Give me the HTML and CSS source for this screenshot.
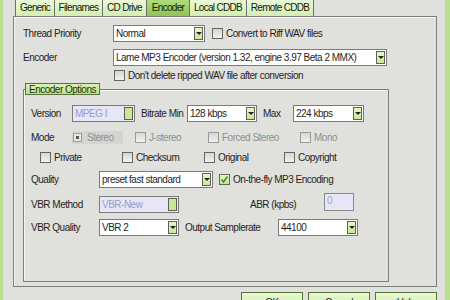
FILE: index.html
```html
<!doctype html>
<html lang="en">
    <head>
        <meta charset="utf-8">
        <title>Options - Encoder</title>
        <link rel="stylesheet" href="styles.css">
    </head>
    <body>
        <div class="ventana">
            <div class="tabs">
                <div class="tab t-gen">Generic</div>
                <div class="tab t-fil">Filenames</div>
                <div class="tab t-cd">CD Drive</div>
                <div class="tab t-enc tab-on">Encoder</div>
                <div class="tab t-loc">Local CDDB</div>
                <div class="tab t-rem">Remote CDDB</div>
            </div>

            <div class="panel">
                <div class="fila">
                    <span class="lbl w-top">Thread Priority</span>
                    <div class="select w-prio"><span class="val">Normal</span><i class="flecha"></i></div>
                    <label class="check ml-7"><span class="box"></span>Convert to Riff WAV files</label>
                </div>
                <div class="fila mt-7">
                    <span class="lbl w-top">Encoder</span>
                    <div class="select w-enc"><span class="val">Lame MP3 Encoder (version 1.32, engine 3.97 Beta 2 MMX)</span><i class="flecha"></i></div>
                </div>
                <div class="fila fila-check">
                    <label class="check"><span class="box"></span>Don't delete ripped WAV file after conversion</label>
                </div>

                <fieldset class="grupo">
                    <legend>Encoder Options</legend>
                    <div class="grupo-body">
                        <div class="fila">
                            <span class="lbl w-ver">Version</span>
                            <div class="select off w-mpeg"><span class="val">MPEG I</span><i class="thumb"></i></div>
                            <span class="lbl ml-6 w-min">Bitrate Min</span>
                            <div class="select w-kbps"><span class="val">128 kbps</span><i class="flecha"></i></div>
                            <span class="lbl ml-6 w-max">Max</span>
                            <div class="select w-kbps2"><span class="val">224 kbps</span><i class="flecha"></i></div>
                        </div>

                        <div class="fila fila-modo">
                            <span class="lbl w-ver">Mode</span>
                            <label class="radio gris w-stereo sel"><span class="rbox"></span>Stereo</label>
                            <label class="check gris w-joint"><span class="box"></span>J-stereo</label>
                            <label class="check gris w-forced"><span class="box"></span>Forced Stereo</label>
                            <label class="check gris"><span class="box"></span>Mono</label>
                        </div>

                        <div class="fila fila-flags">
                            <label class="check w-flag"><span class="box"></span>Private</label>
                            <label class="check w-flag"><span class="box"></span>Checksum</label>
                            <label class="check w-flag2"><span class="box"></span>Original</label>
                            <label class="check"><span class="box"></span>Copyright</label>
                        </div>

                        <div class="fila fila-q">
                            <span class="lbl w-q">Quality</span>
                            <div class="select w-preset"><span class="val">preset fast standard</span><i class="flecha"></i></div>
                            <label class="check ml-6"><span class="box on"><svg width="9" height="9" viewBox="0 0 9 9"><polyline points="1.5,4.5 3.5,7 7.5,1.5" fill="none" stroke="#3f8a2a" stroke-width="1.6"/></svg></span>On-the-fly MP3 Encoding</label>
                        </div>

                        <div class="fila fila-vbr">
                            <span class="lbl w-q">VBR Method</span>
                            <div class="select off w-vbr"><span class="val">VBR-New</span><i class="thumb"></i></div>
                            <span class="lbl w-abr">ABR (kpbs)</span>
                            <div class="input off">0</div>
                        </div>

                        <div class="fila fila-vq">
                            <span class="lbl w-q">VBR Quality</span>
                            <div class="select w-vbr"><span class="val">VBR 2</span><i class="flecha"></i></div>
                            <span class="lbl ml-6 w-out">Output Samplerate</span>
                            <div class="select w-vbr"><span class="val">44100</span><i class="flecha"></i></div>
                        </div>
                    </div>
                </fieldset>
            </div>

            <div class="botones">
                <div class="btn">OK</div>
                <div class="btn">Cancel</div>
                <div class="btn">Help</div>
            </div>
        </div>
    </body>
</html>
```

FILE: styles.css
```css
:root {
    --fondo: #e0e0dc;
    --verde: #b9e08e;
    --borde: #7d7d7d;
    --gris-texto: #8f8f8f;
}

body {
    margin: 0;
    background-color: var(--fondo);
    font-family: "Liberation Sans", Arial, sans-serif;
    font-size: 10px;
    letter-spacing: -0.5px;
    color: #1f1f1f;
}

.ventana {
    height: 300px;
    box-sizing: border-box;
    border-left: 3px solid var(--verde);
    border-right: 5px solid var(--verde);
    padding: 0 8px 0 10px;
    overflow: hidden;
}

/* pestañas */
.tabs {
    display: flex;
    height: 16px;
    padding-left: 2px;
}

.tab {
    height: 19px;
    margin-top: -3px;
    box-sizing: border-box;
    padding-top: 4px;
    line-height: 11px;
    text-align: center;
    border: 1px solid #6f6f6f;
    border-left: none;
    border-bottom: none;
    background: linear-gradient(#eefade, #d3eeb2);
    white-space: nowrap;
    letter-spacing: -0.7px;
    color: #14210c;
}

.tab:first-child {
    border-left: 1px solid #6f6f6f;
}

.t-gen { width: 40px; }
.t-fil { width: 48px; }
.t-cd { width: 44px; }
.t-enc { width: 43px; }
.t-loc { width: 57px; }
.t-rem { width: 67px; }

.tab-on {
    background: linear-gradient(#b4dd80, #8fc455);
}

/* panel */
.panel {
    height: 271px;
    box-sizing: border-box;
    border: 1px solid var(--borde);
    box-shadow: inset 1px 1px 0 #f6f6f4;
    padding: 8px 0 4px 9px;
    display: flex;
    flex-direction: column;
}

.fila {
    display: flex;
    align-items: center;
    height: 17px;
    white-space: nowrap;
}

.fila-check {
    height: 13px;
    margin-top: 3px;
    padding-left: 91px;
}

.lbl {
    display: inline-block;
}

.mt-7 { margin-top: 7px; }
.ml-6 { margin-left: 6px; }
.ml-7 { margin-left: 7px; }

.w-top { width: 90px; }
.w-prio { width: 92px; }
.w-enc { width: 274px; }
.w-ver { width: 41px; }
.w-mpeg { width: 63px; }
.w-min { width: 46px; }
.w-kbps { width: 70px; }
.w-max { width: 30px; }
.w-kbps2 { width: 71px; }
.w-stereo { width: 51px; margin-right: 12px; }
.w-joint { width: 73px; }
.w-forced { width: 92px; }
.w-flag { width: 82px; }
.w-flag2 { width: 80px; }
.w-q { width: 68px; }
.w-preset { width: 114px; }
.w-vbr { width: 80px; }
.w-abr { width: 74px; margin-left: 71px; }
.w-out { width: 93px; }

/* combos */
.select {
    display: flex;
    align-items: center;
    height: 17px;
    box-sizing: border-box;
    border: 1px solid #7a7a7a;
    background-color: #fff;
    padding-left: 2px;
}

.select .val {
    flex: 1;
    overflow: hidden;
}

.flecha {
    display: flex;
    align-items: center;
    justify-content: center;
    width: 9px;
    height: 13px;
    box-sizing: border-box;
    margin-right: 1px;
    border: 1px solid #5f5f5f;
    background: linear-gradient(#e6f7c4, #c9e894);
}

.flecha::after {
    content: "";
    border-left: 3px solid transparent;
    border-right: 3px solid transparent;
    border-top: 3px solid #222;
}

.select.off {
    background-color: #e6e6f6;
    color: #9a9acb;
}

.thumb {
    width: 9px;
    height: 13px;
    box-sizing: border-box;
    margin-right: 1px;
    border: 1px solid #5f5f5f;
    background-color: #c9e890;
}

.input {
    width: 30px;
    height: 18px;
    box-sizing: border-box;
    border: 1px solid #8a8a8a;
    padding: 1px 2px;
    margin-top: -5px;
}

.input.off {
    background-color: #e6e6f6;
    color: #a4a4cc;
}

/* casillas */
.check, .radio {
    display: flex;
    align-items: center;
    height: 13px;
}

.box {
    display: flex;
    align-items: center;
    justify-content: center;
    width: 11px;
    height: 11px;
    box-sizing: border-box;
    margin-right: 3px;
    border: 1px solid #666;
    background: linear-gradient(#d5d5d3, #f2f2f0);
}

.box.on {
    background: linear-gradient(#e4f5c6, #c8e79a);
}

.gris {
    color: var(--gris-texto);
}

.gris .box {
    border-color: #9a9a9a;
}

.radio.sel {
    background-color: #d4d4d2;
}

.rbox {
    display: flex;
    align-items: center;
    justify-content: center;
    width: 9px;
    height: 9px;
    box-sizing: border-box;
    margin: 0 5px 0 1px;
    border: 1px solid #9a9a9a;
    background-color: #e8e8e6;
}

.rbox::after {
    content: "";
    width: 3px;
    height: 3px;
    background-color: #555;
}

/* grupo */
.grupo {
    flex: 1;
    width: 366px;
    box-sizing: border-box;
    margin: 1px 0 0;
    padding: 0;
    border: 1px solid var(--borde);
    box-shadow: inset 1px 1px 0 #f6f6f4;
    min-width: 0;
}

.grupo legend {
    margin-left: 1px;
    padding: 0 3px;
    height: 12px;
    line-height: 11px;
    box-sizing: border-box;
    border: 1px solid #55733a;
    background: linear-gradient(#d9f0b6, #bfe28e);
    color: #1b3410;
}

.grupo-body {
    padding: 10px 0 0 7px;
}

.fila-modo {
    height: 14px;
    margin-top: 8px;
}

.fila-flags {
    height: 14px;
    margin-top: 6px;
    padding-left: 9px;
}

.fila-q {
    margin-top: 7px;
}

.fila-vbr {
    margin-top: 8px;
}

.fila-vq {
    margin-top: 6px;
}

/* botones */
.botones {
    display: flex;
    justify-content: flex-end;
    gap: 5px;
    margin-top: 5px;
}

.btn {
    width: 62px;
    height: 23px;
    box-sizing: border-box;
    border: 1px solid #55733a;
    background: linear-gradient(#e9f8d2, #c6e69c);
    text-align: center;
    line-height: 19px;
}
```
